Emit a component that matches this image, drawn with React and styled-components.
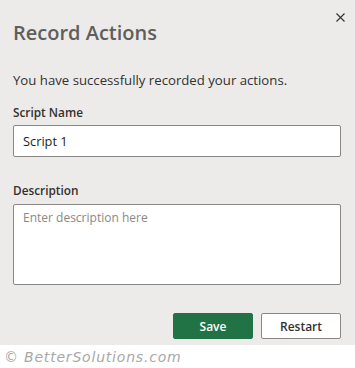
import styled, { createGlobalStyle } from "styled-components";

const GlobalStyle = createGlobalStyle`
  html, body {
    margin: 0;
    padding: 0;
    background: #ffffff;
  }
  body {
    font-family: "Open Sans", "Noto Sans", sans-serif;
    color: #323130;
  }
`;

const Page = styled.div`
  width: 355px;
  height: 368px;
  display: flex;
  flex-direction: column;
`;

const Panel = styled.section`
  height: 345px;
  box-sizing: border-box;
  background: #edebe9;
  padding: 0 14px 0 13px;
  display: flex;
  flex-direction: column;
`;

const Header = styled.div`
  display: flex;
  justify-content: space-between;
  align-items: flex-start;
`;

const Title = styled.h1`
  margin: 19px 0 0 0;
  font-size: 20px;
  line-height: 28px;
  font-weight: 600;
  color: #605e5c;
`;

const CloseButton = styled.button`
  margin: 5px -11px 0 0;
  width: 24px;
  height: 24px;
  padding: 0;
  border: none;
  background: transparent;
  display: flex;
  align-items: center;
  justify-content: center;
  cursor: pointer;
`;

const Message = styled.p`
  margin: 23px 0 0 0;
  font-size: 13.2px;
  line-height: 20px;
  color: #323130;
`;

const Label = styled.label`
  display: block;
  margin: ${({ $top }) => $top}px 0 0 0;
  font-size: 11.8px;
  line-height: 16px;
  font-weight: 600;
  color: #323130;
`;

const TextInput = styled.input`
  box-sizing: border-box;
  width: 100%;
  height: 32px;
  margin-top: 5px;
  padding: 0 9px;
  border: 1px solid #8a8886;
  border-radius: 2px;
  background: #ffffff;
  font-family: inherit;
  font-size: 12.8px;
  color: #201f1e;
  outline: none;
`;

const TextArea = styled.textarea`
  box-sizing: border-box;
  width: 100%;
  height: 81px;
  margin-top: 6px;
  padding: 5px 9px;
  border: 1px solid #8a8886;
  border-radius: 2px;
  background: #ffffff;
  font-family: inherit;
  font-size: 12px;
  line-height: 16px;
  color: #323130;
  resize: none;
  outline: none;
  &::placeholder {
    color: #8a8886;
  }
`;

const Actions = styled.div`
  margin-top: 28px;
  display: flex;
  justify-content: flex-end;
  gap: 8px;
`;

const Button = styled.button`
  box-sizing: border-box;
  width: 80px;
  height: 26px;
  border-radius: 2px;
  font-family: inherit;
  font-size: 12px;
  font-weight: 600;
  cursor: pointer;
  border: 1px solid ${({ $primary }) => ($primary ? "#217346" : "#8a8886")};
  background: ${({ $primary }) => ($primary ? "#217346" : "#ffffff")};
  color: ${({ $primary }) => ($primary ? "#ffffff" : "#323130")};
`;

const Watermark = styled.footer`
  height: 23px;
  padding-left: 4px;
  display: flex;
  align-items: center;
  font-family: "DejaVu Sans", sans-serif;
  font-style: italic;
  font-size: 14px;
  letter-spacing: 0.8px;
  color: #a8a8a8;
`;

const CloseIcon = () => (
  <svg width="9" height="9" viewBox="0 0 9 9">
    <path d="M0.5 0.5 L8.5 8.5 M8.5 0.5 L0.5 8.5" stroke="#323130" strokeWidth="1.1" />
  </svg>
);

export default function App() {
  return (
    <>
      <GlobalStyle />
      <Page>
        <Panel>
          <Header>
            <Title>Record Actions</Title>
            <CloseButton aria-label="Close">
              <CloseIcon />
            </CloseButton>
          </Header>
          <Message>You have successfully recorded your actions.</Message>
          <Label $top={14}>Script Name</Label>
          <TextInput defaultValue="Script 1" />
          <Label $top={25}>Description</Label>
          <TextArea placeholder="Enter description here" />
          <Actions>
            <Button $primary>Save</Button>
            <Button>Restart</Button>
          </Actions>
        </Panel>
        <Watermark>© BetterSolutions.com</Watermark>
      </Page>
    </>
  );
}
